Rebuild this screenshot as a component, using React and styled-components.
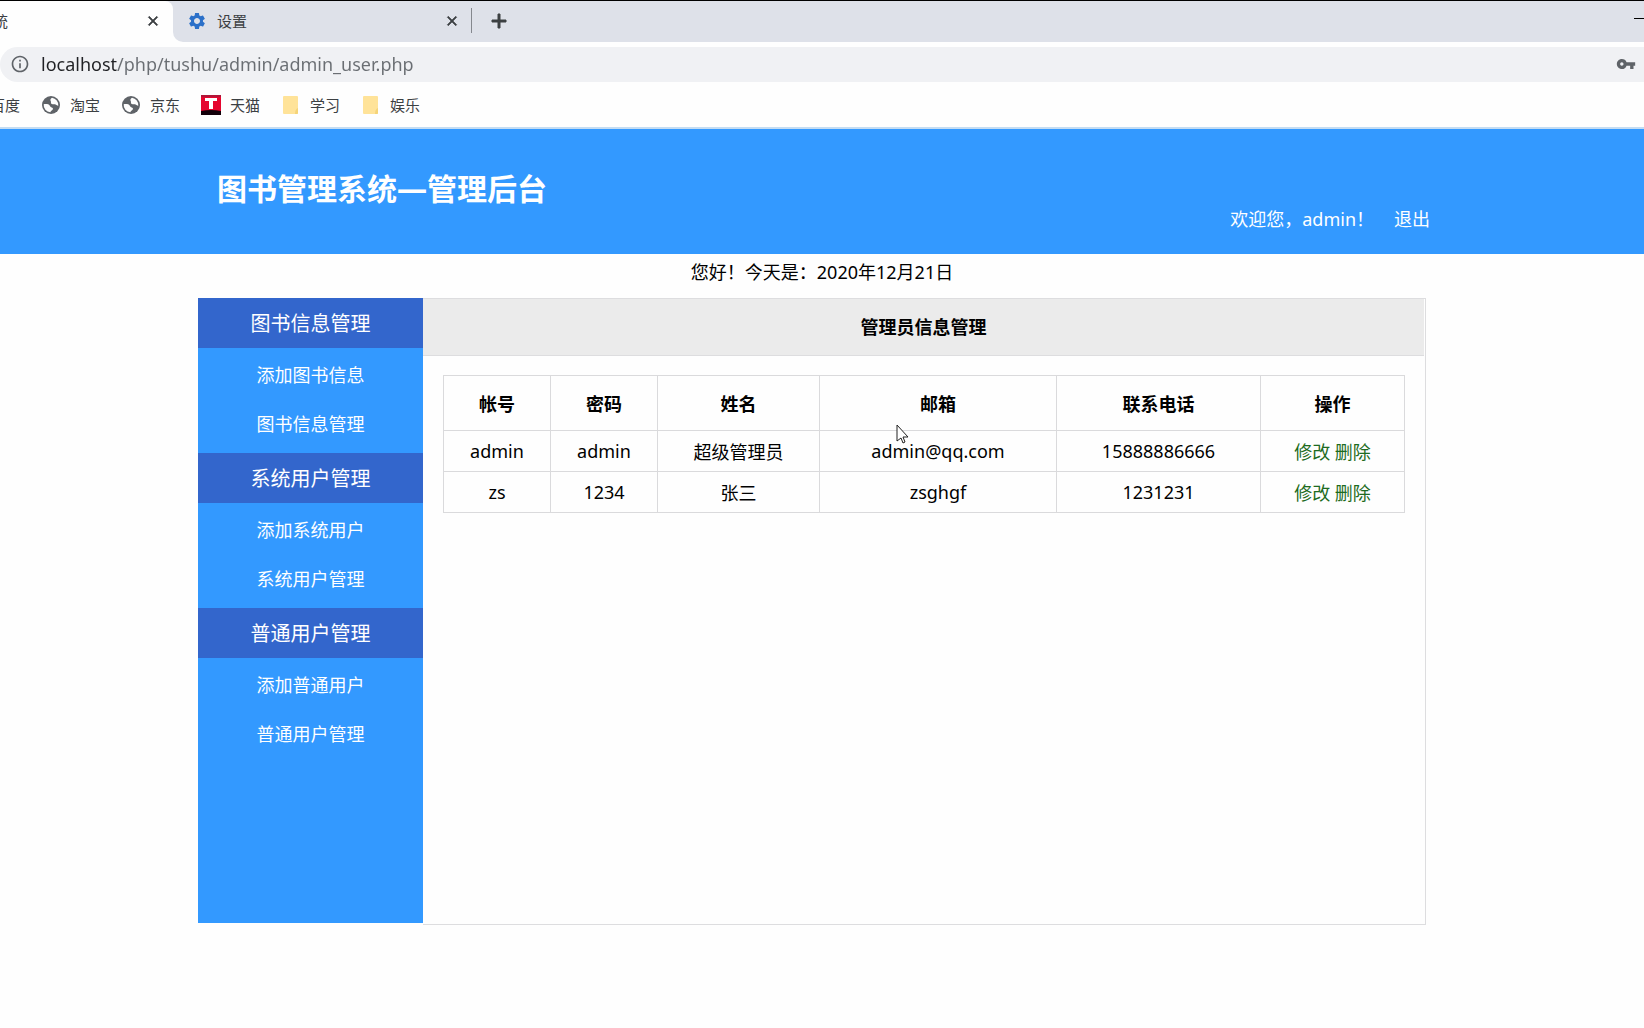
import React, { useState } from "react";
import styled, { createGlobalStyle } from "styled-components";

import {
  MdAdd,
  MdClose,
  MdInfoOutline,
  MdSettings,
  MdVpnKey,
} from "react-icons/md";

// 书签栏
const bookmarks = [
  { name: "淘宝", icon: "globe" },
  { name: "京东", icon: "globe" },
  { name: "天猫", icon: "tmall" },
  { name: "学习", icon: "folder" },
  { name: "娱乐", icon: "folder" },
];

// 左侧菜单
const menus = [
  { title: "图书信息管理", items: ["添加图书信息", "图书信息管理"] },
  { title: "系统用户管理", items: ["添加系统用户", "系统用户管理"] },
  { title: "普通用户管理", items: ["添加普通用户", "普通用户管理"] },
];

const columns = [
  { label: "帐号", width: 107 },
  { label: "密码", width: 107 },
  { label: "姓名", width: 162 },
  { label: "邮箱", width: 237 },
  { label: "联系电话", width: 204 },
  { label: "操作", width: 144 },
];

const users = [
  ["admin", "admin", "超级管理员", "admin@qq.com", "15888886666"],
  ["zs", "1234", "张三", "zsghgf", "1231231"],
];

function BookmarkIcon({ type }) {
  if (type === "globe") {
    return (
      <svg width="20" height="20" viewBox="0 0 20 20">
        <circle cx="10" cy="10" r="9" fill="#5f6368" />
        <path
          d="M11 2.8C9.5 3.6 9 5 9.8 6.2C10.4 7.2 9.4 8 10.4 8.8C12 9.8 13 9 14.6 9.6C16 10.2 16.2 11 17.3 10.8A7.4 7.4 0 0 0 11 2.8Z"
          fill="#fefefe"
        />
        <path
          d="M2.7 9.2C5 9 8.2 9 9 11C9.5 12.6 12.2 12.2 12 14C11.8 15.4 9.6 15.4 9.4 17.3A7.4 7.4 0 0 1 2.7 9.2Z"
          fill="#fefefe"
        />
      </svg>
    );
  }
  if (type === "tmall") {
    return (
      <svg width="20" height="20" viewBox="0 0 20 20">
        <rect width="20" height="20" fill="#e5062f" />
        <rect width="20" height="2" fill="#b01638" />
        <path d="M0 16Q10 14 20 16V20H0Z" fill="#12000a" />
        <path d="M4 3H16V6H12V14H8V6H4Z" fill="#fff" />
      </svg>
    );
  }
  return (
    <svg width="20" height="20" viewBox="0 0 20 20">
      <path d="M3 1H16Q17 1 17 2V18Q17 19 16 19H3Q2 19 2 18V2Q2 1 3 1Z" fill="#ffe399" />
      <path d="M17 13Q14 14 14 19H16Q17 19 17 18Z" fill="#f5d478" />
    </svg>
  );
}

function Browser() {
  const [url, setUrl] = useState("localhost/php/tushu/admin/admin_user.php");

  return (
    <Chrome>
      <TabBar>
        <ActiveSlot>
          <ActiveTab>
            <CutText>图书管理系统</CutText>
            <CloseButton aria-label="关闭标签页">
              <MdClose size={16} />
            </CloseButton>
          </ActiveTab>
        </ActiveSlot>
        <TabRest>
          <Tab>
            <MdSettings size={20} color="#2b70c9" />
            <TabName>设置</TabName>
            <CloseButton aria-label="关闭标签页">
              <MdClose size={16} />
            </CloseButton>
          </Tab>
          <CloseButton aria-label="新标签页">
            <MdAdd size={24} />
          </CloseButton>
          <Minimize aria-label="最小化" />
        </TabRest>
      </TabBar>

      <AddressBar>
        <MdInfoOutline size={20} />
        <Url
          aria-label="地址栏"
          value={url}
          spellCheck={false}
          onChange={(e) => {
            setUrl(e.target.value);
          }}
        />
        <MdVpnKey size={20} />
      </AddressBar>

      <Bookmarks>
        <Bookmark href="#">
          <CutText $wide>百度</CutText>
        </Bookmark>
        {bookmarks.map((b) => (
          <Bookmark href="#" key={b.name}>
            <BookmarkBox>
              <BookmarkIcon type={b.icon} />
            </BookmarkBox>
            {b.name}
          </Bookmark>
        ))}
      </Bookmarks>
    </Chrome>
  );
}

function App() {
  return (
    <>
      <GlobalStyle />
      <Browser />

      <Header>
        <Wrap>
          <Title>图书管理系统—管理后台</Title>
          <UserLine>
            <span>欢迎您，admin！</span>
            <Logout href="#">退出</Logout>
          </UserLine>
        </Wrap>
      </Header>

      <Today>您好！今天是：2020年12月21日</Today>

      <Content>
        <Sidebar>
          {menus.map((menu) => (
            <div key={menu.title}>
              <MenuTitle>{menu.title}</MenuTitle>
              <MenuList>
                {menu.items.map((item) => (
                  <li key={item}>
                    <MenuLink href="#">{item}</MenuLink>
                  </li>
                ))}
              </MenuList>
            </div>
          ))}
        </Sidebar>

        <Main>
          <MainTitle>管理员信息管理</MainTitle>
          <Table>
            <colgroup>
              {columns.map((c) => (
                <col key={c.label} width={c.width} />
              ))}
            </colgroup>
            <thead>
              <tr>
                {columns.map((c) => (
                  <Th key={c.label}>{c.label}</Th>
                ))}
              </tr>
            </thead>
            <tbody>
              {users.map((user) => (
                <tr key={user[0]}>
                  {user.map((value, i) => (
                    <Td key={i}>{value}</Td>
                  ))}
                  <Td>
                    <Action href="#">修改</Action> <Action href="#">删除</Action>
                  </Td>
                </tr>
              ))}
            </tbody>
          </Table>
        </Main>
      </Content>

      <Pointer width="13" height="20" viewBox="0 0 13 20">
        <path
          d="M1 1V17L5 14L7 19L9 18L7 13H12Z"
          fill="#fff"
          stroke="#222"
          strokeWidth="1"
        />
      </Pointer>
    </>
  );
}

export default App;

const GlobalStyle = createGlobalStyle`
  * {
    box-sizing: border-box;
  }
  body {
    margin: 0;
    background-color: #fefefe;
    color: #000;
    font-family: "Noto Sans", "Noto Sans CJK SC", sans-serif;
    font-size: 18px;
  }
  a {
    text-decoration: none;
  }
`;

// 浏览器顶部
const Chrome = styled.div`
  border-top: 1px solid #000;
  border-bottom: 2px solid #c3dcf3;
  background-color: #fefefe;
  overflow: hidden;
`;

const TabBar = styled.div`
  display: flex;
  height: 41px;
  font-size: 15px;
  color: #3c4043;
`;

const ActiveSlot = styled.div`
  width: 173px;
  background-color: #dee1e9;
`;

const ActiveTab = styled.div`
  display: flex;
  justify-content: space-between;
  align-items: center;
  height: 100%;
  padding: 0 8px 2px 0;
  border-top-right-radius: 8px;
  background-color: #fefefe;
`;

// 左边被窗口截断的文字
const CutText = styled.span`
  display: flex;
  justify-content: flex-end;
  width: ${(props) => (props.$wide ? "20px" : "8px")};
  overflow: hidden;
  white-space: nowrap;
`;

const TabRest = styled.div`
  display: flex;
  flex: 1;
  align-items: center;
  gap: 15px;
  padding: 0 0 2px 14px;
  border-bottom-left-radius: 10px;
  background-color: #dee1e9;
`;

const Tab = styled.div`
  display: flex;
  align-items: center;
  width: 285px;
  height: 25px;
  padding-right: 7px;
  border-right: 1px solid #85888e;
`;

const TabName = styled.span`
  flex: 1;
  padding-left: 10px;
`;

const CloseButton = styled.button`
  display: flex;
  justify-content: center;
  align-items: center;
  min-width: 24px;
  height: 24px;
  padding: 0;
  border: none;
  background: none;
  color: #3c4043;
  cursor: pointer;

  path:last-child {
    stroke: #3c4043;
    stroke-width: 1px;
  }
`;

const Minimize = styled.button`
  width: 10px;
  height: 6px;
  margin-left: auto;
  padding: 0;
  border: none;
  border-top: 1px solid #000;
  background: none;
`;

const AddressBar = styled.div`
  display: flex;
  align-items: center;
  height: 35px;
  margin-top: 5px;
  padding: 0 8px 2px 10px;
  border-radius: 18px 0 0 18px;
  background-color: #f0f1f4;
  color: #5f6368;
`;

// 域名部分颜色更深
const Url = styled.input`
  flex: 1;
  min-width: 0;
  padding: 0 0 0 11px;
  border: none;
  outline: none;
  background: linear-gradient(to right, #202124 87px, #6a6e73 87px);
  background-clip: text;
  color: transparent;
  caret-color: #202124;
  font-family: inherit;
  font-size: 18px;
  line-height: 26px;
`;

const Bookmarks = styled.nav`
  display: flex;
  align-items: center;
  gap: 21px;
  height: 45px;
`;

const Bookmark = styled.a`
  display: flex;
  align-items: center;
  gap: 9px;
  color: #3c4043;
  font-size: 15px;
`;

const BookmarkBox = styled.span`
  display: flex;
  justify-content: center;
  width: 20px;
`;

// 页头
const Header = styled.header`
  padding: 41px 0 24px;
  background-color: #3399ff;
  color: #fff;
`;

const Wrap = styled.div`
  max-width: 1250px;
  margin: 0 auto;
  padding: 0 17px 0 20px;
`;

const Title = styled.h1`
  margin: 0;
  font-size: 30px;
  line-height: 38px;
`;

const UserLine = styled.div`
  display: flex;
  justify-content: flex-end;
  gap: 20px;
  line-height: 22px;
`;

const Logout = styled.a`
  color: #fff;
`;

const Today = styled.div`
  margin-bottom: 8px;
  line-height: 36px;
  text-align: center;
`;

// 内容区
const Content = styled.div`
  display: flex;
  max-width: 1250px;
  min-height: 627px;
  margin: 0 auto;
  padding: 0 21px 0 1px;
`;

const Sidebar = styled.aside`
  width: 225px;
  margin-bottom: 2px;
  background-color: #3399ff;
  text-align: center;
`;

const MenuTitle = styled.h2`
  margin: 0;
  padding-top: 2px;
  background-color: #3366cc;
  color: #fff;
  font-size: 20px;
  font-weight: normal;
  line-height: 48px;
`;

const MenuList = styled.ul`
  margin: 0;
  padding: 3px 0 4px;
  list-style: none;
`;

const MenuLink = styled.a`
  display: block;
  color: #fff;
  line-height: 49px;
`;

const Main = styled.main`
  flex: 1;
  border: 1px solid #dddddf;
  border-left: none;
`;

const MainTitle = styled.h2`
  margin: 0 1px 0 0;
  border-bottom: 1px solid #dddddf;
  background-color: #ebebeb;
  font-size: 18px;
  line-height: 56px;
  text-align: center;
`;

const Table = styled.table`
  width: calc(100% - 40px);
  margin: 19px 20px;
  border-collapse: collapse;
  table-layout: fixed;
  text-align: center;
`;

const Th = styled.th`
  height: 55px;
  padding: 0;
  border: 1px solid #dadadc;
`;

const Td = styled.td`
  height: 41px;
  padding: 0;
  border: 1px solid #dadadc;
`;

const Action = styled.a`
  color: #1d6b21;
`;

// 鼠标指针
const Pointer = styled.svg`
  position: absolute;
  top: 424px;
  left: 896px;
  pointer-events: none;
`;
